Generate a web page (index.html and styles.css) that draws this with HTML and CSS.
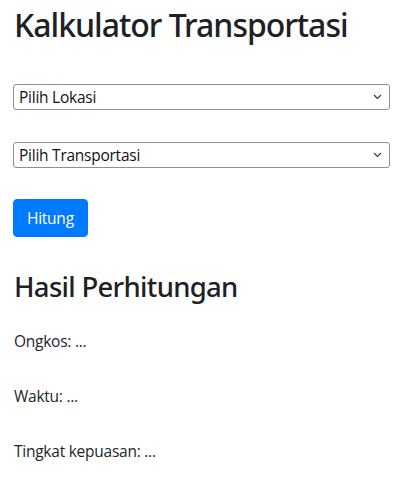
FILE: index.html
```html
<!DOCTYPE html>
<html lang="id">
<head>
<meta charset="utf-8">
<title>Kalkulator Transportasi</title>
<link rel="stylesheet" href="styles.css">
</head>
<body>
<div class="container">
  <h1 class="title">Kalkulator Transportasi</h1>
  <div class="field field-first">
    <select class="select">
      <option>Pilih Lokasi</option>
    </select>
    <svg class="chevron" width="9" height="6" viewBox="0 0 9 6"><path d="M1 1 L4.5 4.5 L8 1" fill="none" stroke="#333" stroke-width="1.1"/></svg>
  </div>
  <div class="field field-second">
    <select class="select">
      <option>Pilih Transportasi</option>
    </select>
    <svg class="chevron" width="9" height="6" viewBox="0 0 9 6"><path d="M1 1 L4.5 4.5 L8 1" fill="none" stroke="#333" stroke-width="1.1"/></svg>
  </div>
  <button class="btn" type="button">Hitung</button>
  <h2 class="subtitle">Hasil Perhitungan</h2>
  <p class="result result-first">Ongkos: ...</p>
  <p class="result">Waktu: ...</p>
  <p class="result result-last">Tingkat kepuasan: ...</p>
</div>
</body>
</html>
```

FILE: styles.css
```css
html, body {
  margin: 0;
  padding: 0;
  background: #ffffff;
}

body {
  font-family: "Open Sans", "Noto Sans", sans-serif;
  color: #212529;
  font-size: 15.5px;
  line-height: 24px;
  letter-spacing: -0.25px;
}

.container {
  padding: 0 24px 0 13px;
}

.title {
  margin: 6px 0 0 1px;
  font-family: "Noto Sans", "Open Sans", sans-serif;
  font-size: 32px;
  line-height: 38px;
  font-weight: 500;
  letter-spacing: -1px;
  color: #1d2125;
}

.field {
  position: relative;
  width: 377px;
}

.field-first {
  margin-top: 40px;
}

.field-second {
  margin-top: 32px;
}

.select {
  display: block;
  width: 100%;
  height: 26px;
  box-sizing: border-box;
  border: 1px solid #8f8f8f;
  border-radius: 3px;
  background: #ffffff;
  color: #111111;
  font-family: inherit;
  font-size: 15.5px;
  letter-spacing: -0.25px;
  padding: 0 20px 0 5px;
  margin: 0;
  -webkit-appearance: none;
  appearance: none;
}

.chevron {
  position: absolute;
  right: 8px;
  top: 10px;
}

.btn {
  display: block;
  margin-top: 31px;
  height: 38px;
  box-sizing: border-box;
  padding: 6px 13px;
  border: 1px solid #007bff;
  border-radius: 4px;
  background: #007bff;
  color: #ffffff;
  font-family: inherit;
  font-size: 15.5px;
  letter-spacing: -0.25px;
  line-height: 24px;
}

.subtitle {
  margin: 33px 0 0 1px;
  font-family: "Noto Sans", "Open Sans", sans-serif;
  font-size: 27.5px;
  line-height: 34px;
  font-weight: 500;
  letter-spacing: -0.7px;
  color: #1d2125;
}

.result {
  margin: 31px 0 0 1px;
}

.result-first {
  margin-top: 25px;
}
```
